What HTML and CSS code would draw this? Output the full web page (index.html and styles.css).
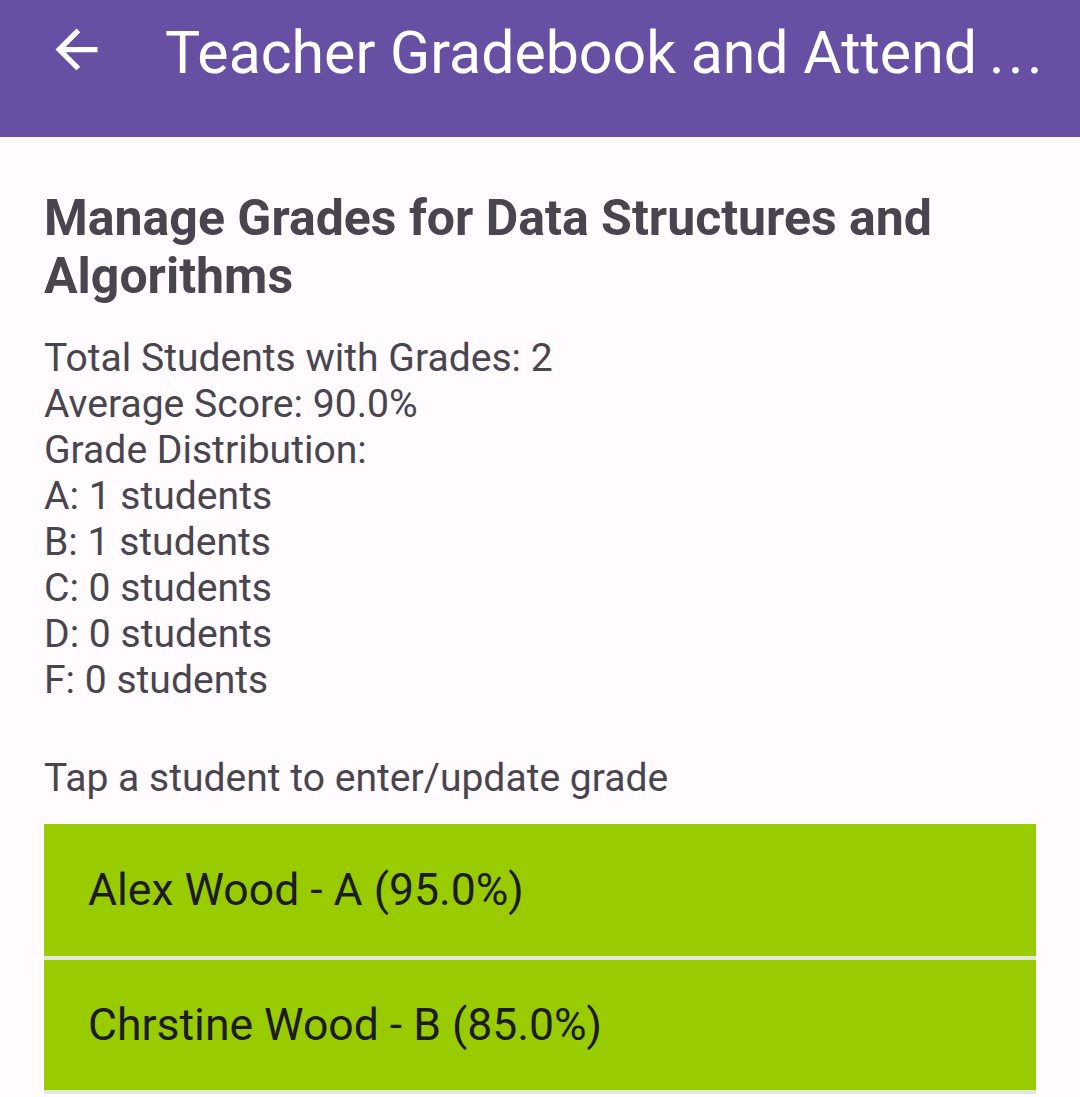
FILE: index.html
```html
<!DOCTYPE html>
<html lang="en">
<head>
<meta charset="utf-8">
<title>Teacher Gradebook and Attendance</title>
<link rel="stylesheet" href="styles.css">
</head>
<body>
<header class="appbar">
  <button class="nav-btn" aria-label="Back">
    <svg viewBox="0 0 24 24" width="63" height="63" aria-hidden="true"><path fill="#ffffff" d="M20 11H7.83l5.59-5.59L12 4l-8 8 8 8 1.41-1.41L7.83 13H20v-2z"/></svg>
  </button>
  <h1 class="appbar-title" title="Teacher Gradebook and Attendance">Teacher Gradebook and Attend<span class="dots">...</span></h1>
</header>
<main class="content">
  <h2 class="heading">Manage Grades for Data Structures and Algorithms</h2>
  <div class="stats">
    <div>Total Students with Grades: 2</div>
    <div>Average Score: 90.0%</div>
    <div>Grade Distribution:</div>
    <div>A: 1 students</div>
    <div>B: 1 students</div>
    <div>C: 0 students</div>
    <div>D: 0 students</div>
    <div>F: 0 students</div>
  </div>
  <p class="hint">Tap a student to enter/update grade</p>
  <ul class="students">
    <li class="student">Alex Wood - A (95.0%)</li>
    <li class="student">Chrstine Wood - B (85.0%)</li>
  </ul>
</main>
</body>
</html>
```

FILE: styles.css
```css
html, body {
  margin: 0;
  padding: 0;
}
body {
  background: #fffbfe;
  font-family: Roboto, "Noto Sans", sans-serif;
  color: #49454f;
  width: 1080px;
  height: 1097px;
  overflow: hidden;
}
.appbar {
  background: #6750a4;
  height: 137px;
  box-sizing: border-box;
  padding: 18px 20px 0 45px;
  display: flex;
  align-items: flex-start;
  gap: 57px;
}
.nav-btn {
  border: 0;
  background: transparent;
  padding: 0;
  margin: 0;
  width: 63px;
  height: 63px;
  flex: 0 0 63px;
  display: block;
}
.nav-btn svg {
  display: block;
}
.appbar-title {
  margin: 0;
  font-size: 59px;
  font-weight: 400;
  line-height: 69px;
  color: #ffffff;
  white-space: nowrap;
  min-width: 0;
  flex: 1;
}
.dots {
  margin-left: 12px;
  letter-spacing: 3.5px;
}
.content {
  padding: 0 44px;
}
.heading {
  margin: 52px 0 0;
  font-size: 50px;
  line-height: 58px;
  font-weight: 700;
  color: #49454f;
}
.stats {
  margin-top: 30px;
  font-size: 39.1px;
  line-height: 46px;
}
.hint {
  margin: 52px 0 0;
  font-size: 39.1px;
  line-height: 46px;
}
.students {
  list-style: none;
  margin: 23px 0 0;
  padding: 0;
}
.student {
  background: #99cc00;
  height: 136px;
  box-sizing: border-box;
  padding: 0 44px;
  display: flex;
  align-items: center;
  font-size: 44.5px;
  color: #1c1b1f;
  border-bottom: 4px solid #e3e6dc;
}
.student + .student {
  height: 134px;
}
```
